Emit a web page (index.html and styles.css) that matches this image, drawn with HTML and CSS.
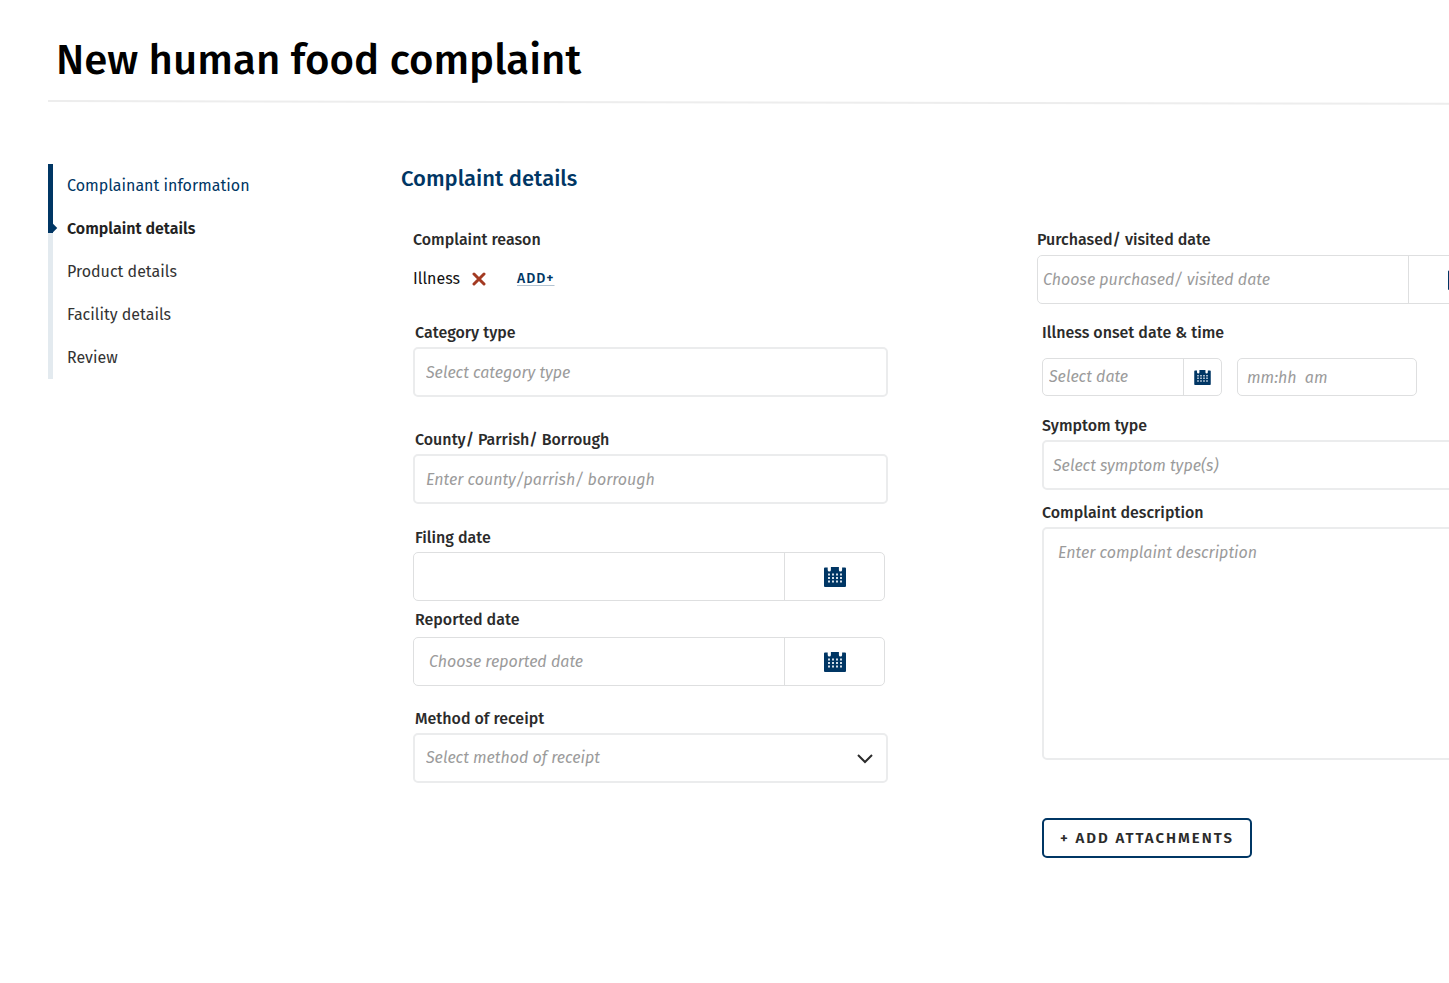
FILE: index.html
```
<!DOCTYPE html>
<html lang="en">

<head>
  <meta charset="UTF-8">
  <meta name="viewport" content="width=device-width, initial-scale=1.0">
  <title>New human food complaint</title>
  <link rel="stylesheet" href="styles.css">
</head>

<body>
  <!-- shared calendar icon -->
  <svg class="icon-defs" width="0" height="0" aria-hidden="true">
    <symbol id="calendar" viewBox="0 0 22 20">
      <path fill="#003664" d="M1 .5h2.700V3a1.600 1.600 0 0 0 3.200 0V0h8v3a1.600 1.600 0 0 0 3.200 0V.5H21a1 1 0 0 1 1 1V19a1 1 0 0 1-1 1H1a1 1 0 0 1-1-1V1.500a1 1 0 0 1 1-1z" />
      <path stroke="#d5e0ea" stroke-width="2" stroke-dasharray="2 2" d="M4 7.500h14M4 11h14M4 14.500h14" />
    </symbol>
  </svg>

  <div class="page">
    <header class="page-header">
      <h1>New human food complaint</h1>
      <svg class="rule" viewBox="0 0 1000 6" preserveAspectRatio="none" aria-hidden="true">
        <path d="M0 2L1000 5" stroke="#ededed" stroke-width="2" />
      </svg>
    </header>

    <div class="layout">
      <nav class="steps">
        <ul>
          <li><a class="done" href="#">Complainant information</a></li>
          <li class="active"><a href="#" aria-current="step">Complaint details</a></li>
          <li><a href="#">Product details</a></li>
          <li><a href="#">Facility details</a></li>
          <li><a href="#">Review</a></li>
        </ul>
      </nav>

      <main>
        <h2>Complaint details</h2>
        <form class="form">
          <!-- left column -->
          <div class="column">
            <div class="field reason">
              <span class="label">Complaint reason</span>
              <div class="reason-row">
                <span>Illness</span>
                <button type="button" class="remove" aria-label="Remove illness">
                  <svg width="14" height="14" viewBox="0 0 14 14" fill="none" stroke="#a33a22" stroke-width="3" stroke-linecap="round">
                    <path d="M2 2l10 10M12 2L2 12" />
                  </svg>
                </button>
                <a class="add" href="#">ADD+</a>
              </div>
            </div>

            <div class="field category">
              <label for="category">Category type</label>
              <input class="box" type="text" id="category" placeholder="Select category type">
            </div>

            <div class="field county">
              <label for="county">County/ Parrish/ Borrough</label>
              <input class="box" type="text" id="county" placeholder="Enter county/parrish/ borrough">
            </div>

            <div class="field filing">
              <label for="filing">Filing date</label>
              <div class="date-group">
                <input type="text" id="filing">
                <button type="button" aria-label="Open calendar"><svg width="22" height="20"><use href="#calendar" /></svg></button>
              </div>
            </div>

            <div class="field reported">
              <label for="reported">Reported date</label>
              <div class="date-group">
                <input type="text" id="reported" placeholder="Choose reported date">
                <button type="button" aria-label="Open calendar"><svg width="22" height="20"><use href="#calendar" /></svg></button>
              </div>
            </div>

            <div class="field method">
              <label for="method">Method of receipt</label>
              <div class="select-wrap">
                <select class="box" id="method">
                  <option>Select method of receipt</option>
                </select>
                <svg class="chevron" width="16" height="10" viewBox="0 0 16 10" fill="none" stroke="#2b2b2b" stroke-width="2">
                  <path d="M1 1l7 7 7-7" />
                </svg>
              </div>
            </div>
          </div>

          <!-- right column -->
          <div class="column">
            <div class="field purchased">
              <label for="purchased">Purchased/ visited date</label>
              <div class="date-group">
                <input type="text" id="purchased" placeholder="Choose purchased/ visited date">
                <button type="button" aria-label="Open calendar"><svg width="22" height="20"><use href="#calendar" /></svg></button>
              </div>
            </div>

            <div class="indent">
              <div class="field onset">
                <label for="onset-date">Illness onset date &amp; time</label>
                <div class="onset-row">
                  <div class="date-group small">
                    <input type="text" id="onset-date" placeholder="Select date">
                    <button type="button" aria-label="Open calendar"><svg width="17" height="15"><use href="#calendar" /></svg></button>
                  </div>
                  <input class="time" type="text" aria-label="Onset time" placeholder="mm:hh&nbsp; am">
                </div>
              </div>

              <div class="field symptom">
                <label for="symptom">Symptom type</label>
                <input class="box" type="text" id="symptom" placeholder="Select symptom type(s)">
              </div>

              <div class="field description">
                <label for="description">Complaint description</label>
                <textarea class="box" id="description" placeholder="Enter complaint description"></textarea>
              </div>

              <button type="button" class="attach">+ ADD ATTACHMENTS</button>
            </div>
          </div>
        </form>
      </main>
    </div>
  </div>
</body>

</html>
```
FILE: styles.css
```
* {
  box-sizing: border-box;
  margin: 0;
  padding: 0;
}

html {
  overflow-x: hidden;
}

body {
  background-color: #ffffff;
  color: #2b2b2b;
  font-family: "Fira Sans", "Noto Sans", sans-serif;
  font-size: 16px;
  line-height: 20px;
  overflow-x: hidden;
}

input,
textarea,
select,
button {
  font: inherit;
  color: inherit;
}

.icon-defs {
  position: absolute;
}

/* the form runs on past the right edge of the window */
.page {
  margin-right: -63px;
  padding: 32px 0 60px 48px;
}

h1 {
  padding-left: 8px;
  color: #000000;
  font-size: 42px;
  font-weight: 500;
  line-height: 56px;
}

.rule {
  display: block;
  width: 100%;
  height: 6px;
  margin-top: 11px;
}

.layout {
  display: flex;
  padding-top: 59px;
}

/* steps */
.steps {
  flex: 0 0 353px;
}

.steps ul {
  position: relative;
  list-style: none;
  border-left: 5px solid #e3eaef;
}

.steps ul::before {
  content: "";
  position: absolute;
  top: 0;
  left: -5px;
  width: 5px;
  height: 69px;
  background-color: #003664;
}

.steps li {
  position: relative;
  padding-left: 14px;
  line-height: 43px;
}

.steps .active::before {
  content: "";
  position: absolute;
  top: 18px;
  left: -3px;
  width: 6px;
  height: 6px;
  background-color: #003664;
  transform: rotate(45deg);
}

.steps a {
  color: #333333;
  text-decoration: none;
}

.steps .done {
  color: #003664;
}

.steps .active a {
  color: #222222;
  font-weight: 600;
}

/* form */
main {
  flex: 1;
  min-width: 0;
}

h2 {
  color: #003664;
  font-size: 22px;
  font-weight: 500;
  line-height: 30px;
}

.form {
  display: grid;
  grid-template-columns: 1fr 1fr;
  gap: 149px;
  padding: 36px 0 0 12px;
}

.field {
  display: flex;
  flex-direction: column;
  gap: 4px;
}

label,
.label {
  padding-left: 2px;
  font-weight: 500;
}

.box {
  width: 100%;
  height: 50px;
  padding: 0 11px;
  border: 2px solid #ebeced;
  border-radius: 5px;
  background-color: #ffffff;
}

::placeholder {
  color: #9b9b9b;
  font-style: italic;
  opacity: 1;
}

.date-group {
  display: flex;
  height: 49px;
  margin-right: 3px;
  border: 1px solid #dedfe0;
  border-radius: 5px;
}

.date-group input {
  flex: 1;
  min-width: 0;
  padding-left: 15px;
  border: none;
  background: none;
}

.date-group button {
  display: flex;
  align-items: center;
  justify-content: center;
  width: 100px;
  border: none;
  border-left: 1px solid #dedfe0;
  background: none;
  cursor: pointer;
}

.reason {
  gap: 19px;
}

.reason .label {
  padding-left: 0;
}

.reason-row {
  display: flex;
  align-items: center;
  color: #111111;
}

.remove {
  display: flex;
  margin: 0 31px 0 12px;
  border: none;
  background: none;
  cursor: pointer;
}

.add {
  color: #003664;
  font-size: 14px;
  font-weight: 500;
  letter-spacing: 1px;
  text-decoration-color: #b3c3d1;
  text-underline-offset: 2px;
}

.category {
  margin-top: 34px;
}

.county {
  margin-top: 33px;
}

.filing {
  margin-top: 24px;
}

.reported {
  gap: 7px;
  margin-top: 9px;
}

.method {
  margin-top: 23px;
}

.select-wrap {
  position: relative;
}

.select-wrap select {
  appearance: none;
  color: #9b9b9b;
  font-style: italic;
}

.chevron {
  position: absolute;
  top: 21px;
  right: 15px;
  pointer-events: none;
}

/* right column */
.purchased {
  gap: 5px;
}

.purchased label {
  padding-left: 0;
}

.purchased .date-group input {
  padding-left: 5px;
}

.indent {
  margin-left: 5px;
}

.indent label {
  padding-left: 0;
}

.onset {
  gap: 15px;
  margin-top: 19px;
}

.onset-row {
  display: flex;
  gap: 15px;
}

.date-group.small {
  width: 180px;
  height: 38px;
  margin-right: 0;
}

.date-group.small input {
  padding-left: 6px;
}

.date-group.small button {
  width: 38px;
}

.time {
  width: 180px;
  height: 38px;
  padding-left: 9px;
  border: 1px solid #dedfe0;
  border-radius: 5px;
}

.symptom {
  margin-top: 20px;
}

.indent .box {
  padding-left: 9px;
}

.description {
  margin-top: 13px;
}

.indent textarea.box {
  display: block;
  height: 233px;
  padding: 14px;
  resize: none;
}

.attach {
  margin-top: 58px;
  padding: 8px 16px;
  border: 2px solid #003664;
  border-radius: 5px;
  background-color: #ffffff;
  font-size: 15px;
  font-weight: 600;
  letter-spacing: 2px;
  cursor: pointer;
}
```
